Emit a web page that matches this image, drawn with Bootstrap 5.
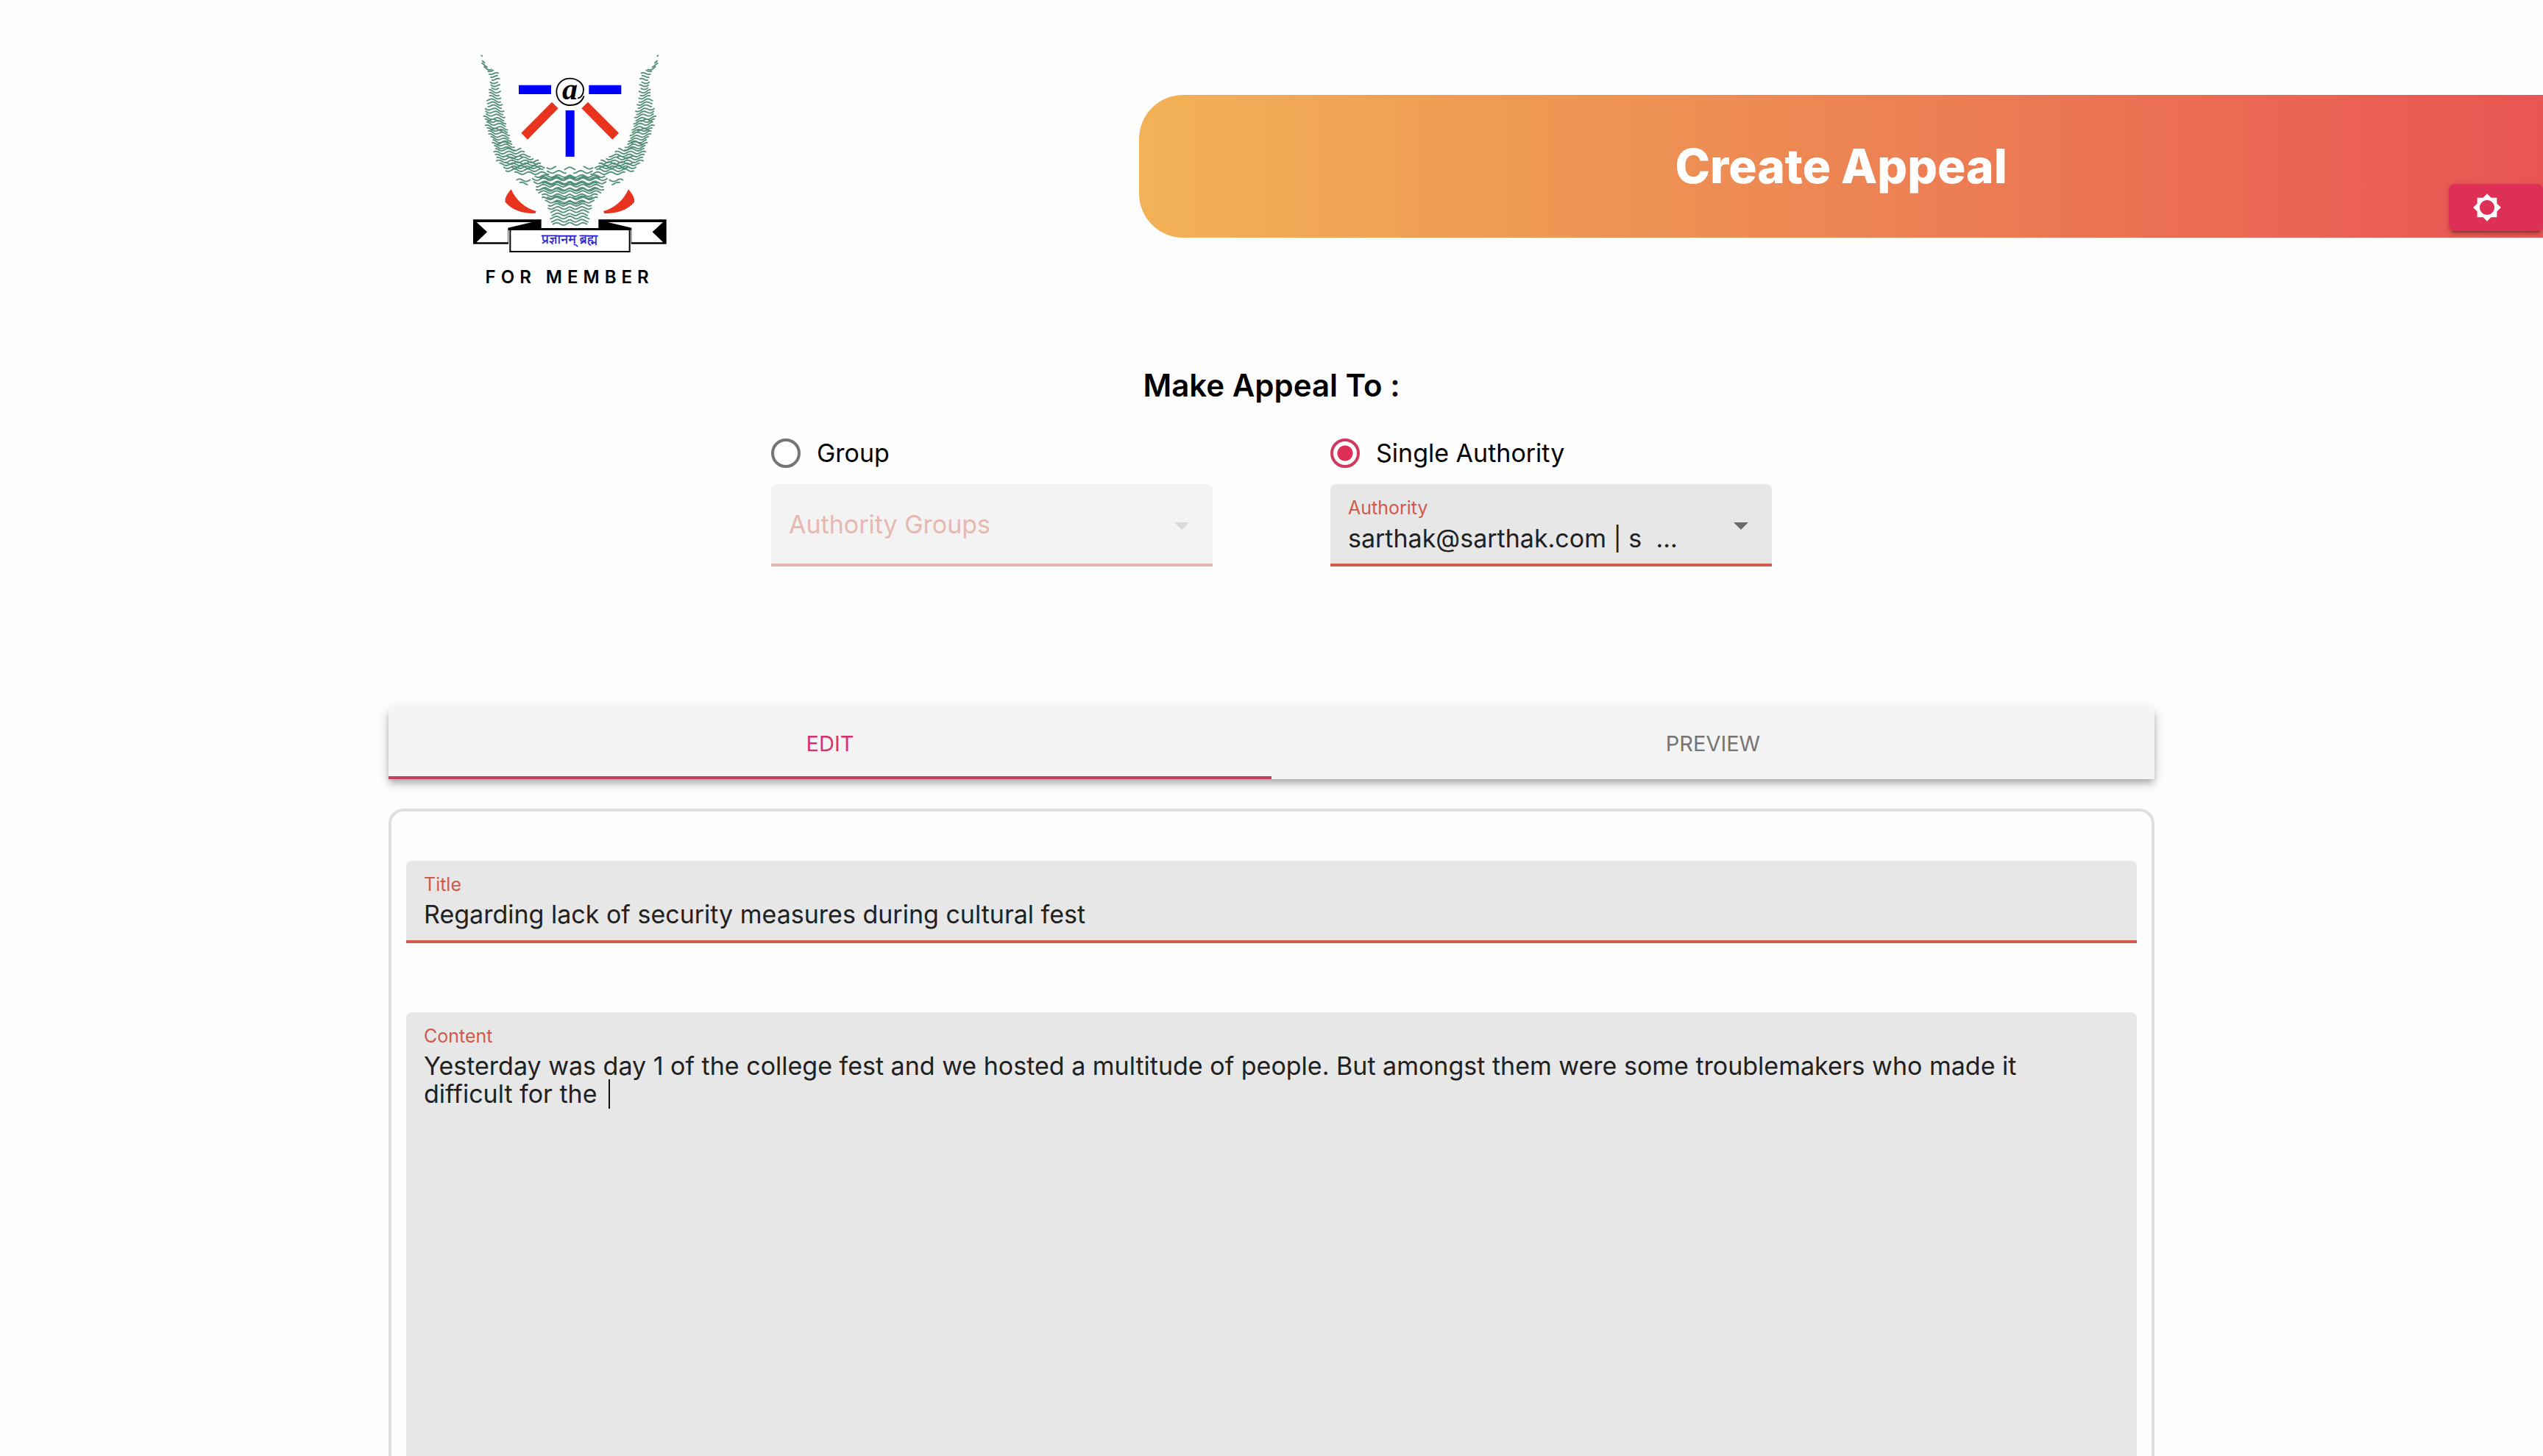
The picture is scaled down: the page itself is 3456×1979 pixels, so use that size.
<!DOCTYPE html>
<html lang="en">
<head>
<meta charset="utf-8">
<meta name="viewport" content="width=device-width, initial-scale=1">
<title>Create Appeal</title>
<link rel="stylesheet" href="https://cdn.jsdelivr.net/npm/bootstrap@5.3.0/dist/css/bootstrap.min.css">
<style>
  :root { --accent: #de3056; --coral: #cf5a4a; --field: #e7e7e7; }
  body { font-family: Inter, "Noto Sans", sans-serif; font-size: 34px; line-height: 40px; color: #000; background: #fefefe; }
  .brand-col { width: 44.8%; padding-top: 73px; }
  .brand-logo { width: 263px; height: 270px; }
  .brand-role { font-size: 24px; line-height: 32px; font-weight: 600; letter-spacing: 7px; margin-top: 18px; }
  .hero { margin-top: 129px; height: 194px; border-radius: 60px 0 0 60px; background: linear-gradient(90deg, #f2b257, #ee9453 33%, #ec7c53 60%, #ea5c54 92%, #e85653); }
  .hero h1 { font-size: 64px; line-height: 72px; font-weight: 800; color: #fff; }
  .theme-btn { right: 0; bottom: 9px; width: 128px; height: 64px; padding: 0 0 0 32px; border-radius: 8px; background: var(--accent); color: #fff;
    box-shadow: 0 6px 2px -4px rgba(0,0,0,.2), 0 4px 4px rgba(0,0,0,.14), 0 2px 10px rgba(0,0,0,.12); }
  .theme-btn:hover { background: #c9284b; color: #fff; }
  .recipient { margin-top: 107px; }
  .recipient h2 { font-size: 42px; line-height: 48px; font-weight: 600; }
  .recipient-grid { gap: 160px; margin-top: 48px; }
  .recipient-col { width: 600px; }
  .pick { gap: 22px; margin-bottom: 22px; }
  .pick input { appearance: none; width: 40px; height: 40px; margin: 0; border: 4px solid #757575; border-radius: 50%; background: #fff; }
  .pick input:checked { border-color: #d03a60; background: radial-gradient(circle, var(--accent) 10px, #fff 11px); }
  .filled { background: var(--field); border-bottom: 4px solid var(--coral); border-radius: 8px 8px 0 0; padding: 16px 24px 0; }
  .filled-line { height: 112px; }
  .filled label { font-size: 25px; line-height: 32px; color: var(--coral); }
  .filled input, .filled select, .filled textarea { border: 0; outline: 0; padding: 0; margin: 0; background: none; color: #212121; width: 100%; display: block; appearance: none; line-height: 38px; resize: none; opacity: 1; }
  .filled input { height: 48px; }
  .filled select { height: 52px; }
  .filled textarea { margin-top: 6px; }
  .filled .arrow { right: 32px; top: 52px; width: 20px; height: 10px; fill: #6b6b6b; pointer-events: none; }
  .filled.is-off { background: #f3f3f3; border-color: #e6b8b0; padding-top: 2px; }
  .filled.is-off select { height: 106px; color: #e6b8b0; }
  .filled.is-off .arrow { fill: #d9d9d9; }
  .editor { width: 100%; max-width: 2400px; margin-top: 193px; }
  .editor-tabs { background: #f4f4f4; box-shadow: 0 4px 8px -2px rgba(0,0,0,.2), 0 8px 10px rgba(0,0,0,.14), 0 2px 20px rgba(0,0,0,.12); }
  .editor-tabs .nav-link { height: 96px; padding: 4px 0 0; border: 0; border-bottom: 4px solid transparent; border-radius: 0; background: none; font-size: 29px; color: #757575; }
  .editor-tabs .nav-link.active { color: #d6336a; border-color: #c2405f; }
  .sheet { margin-top: 40px; border: 4px solid #e0e0e0; border-bottom: 0; border-radius: 20px 20px 0 0; padding: 67px 20px 0; }
  .sheet .filled-line { margin-bottom: 94px; }
  .body-field { border-bottom: 0; }
  .caret-bar { left: 275px; top: 91px; width: 2px; height: 40px; background: #111; }
</style>
<script src="https://cdn.jsdelivr.net/npm/bootstrap@5.3.0/dist/js/bootstrap.bundle.min.js"></script>
</head>
<body class="d-flex flex-column min-vh-100">
<header class="d-flex align-items-start">
  <div class="brand-col d-flex flex-column align-items-center">
    <svg class="brand-logo" viewBox="67 40 789 810" role="img" aria-label="Institute emblem">
      <g id="laurel" fill="none" stroke="#528f76" stroke-width="5.5" stroke-linejoin="round" stroke-linecap="round"></g>
      <g fill="#00f"><path d="M253 168H385V205H253ZM539 168H671V205H539ZM444 271H480V460H444Z"/></g>
      <g fill="#e8331f">
        <path d="M388 237L414 263L289 390L263 363ZM535 237L509 263L635 390L661 363Z"/>
        <path d="M222 593C204 615 196 628 198 645C225 678 270 691 320 691L324 682C279 671 242 638 222 593ZM700 593C718 615 726 628 724 645C697 678 652 691 602 691L598 682C643 671 680 638 700 593Z"/>
      </g>
      <path d="M519 212C510 237 488 250 461 250C430 250 407 226 407 195C407 164 430 141 461 141C494 141 517 162 517 187C517 207 505 222 493 221" fill="none" stroke="#000" stroke-width="5.5"/>
      <text x="430" y="225" font-family="Liberation Serif" font-size="126" font-weight="700" font-style="italic">a</text>
      <path d="M67 716H345V754H211V816H67ZM855 716H578V754H711V816H855Z"/>
      <path d="M82 728L124 767L82 807V809H209V750L306 727H82ZM840 728L798 767L840 807V809H713V750L616 727H840Z" fill="#fff"/>
      <path d="M76 726L123 767L76 810ZM846 726L799 767L846 810Z"/>
      <path d="M218 757H705V847H218Z" fill="#fff" stroke="#000" stroke-width="6"/>
      <path d="M211 751H711V760H211Z"/>
      <text x="460" y="814" text-anchor="middle" font-family="Noto Sans Devanagari, Noto Sans, sans-serif" font-size="54" fill="#2a1fd6" stroke="#2a1fd6">प्रज्ञानम् ब्रह्म</text>
    </svg>
    <div class="brand-role">FOR MEMBER</div>
  </div>
  <div class="hero flex-grow-1 position-relative d-flex align-items-center justify-content-center">
    <h1 class="m-0">Create Appeal</h1>
    <button type="button" class="theme-btn btn border-0 position-absolute d-flex align-items-center" aria-label="Toggle theme">
      <svg width="40" height="40" viewBox="0 0 24 24" fill="currentColor"><path d="M20 15.31L23.31 12 20 8.69V4h-4.69L12 .69 8.69 4H4v4.69L.69 12 4 15.31V20h4.69L12 23.31 15.31 20H20v-4.69zM12 18c-3.31 0-6-2.69-6-6s2.69-6 6-6 6 2.69 6 6-2.69 6-6 6z"/></svg>
    </button>
  </div>
</header>

<main class="d-flex flex-column align-items-center flex-grow-1">
  <section class="recipient">
    <h2 class="m-0 text-center">Make Appeal To :</h2>
    <div class="recipient-grid d-flex flex-wrap justify-content-center">
      <div class="recipient-col">
        <div class="pick d-flex align-items-center">
          <input type="radio" name="target" id="t-group"><label for="t-group">Group</label>
        </div>
        <div class="filled filled-line is-off position-relative">
          <select aria-label="Authority Groups" disabled><option>Authority Groups</option></select>
          <svg class="arrow position-absolute" viewBox="0 0 20 10"><path d="M0 0H20L10 10Z"/></svg>
        </div>
      </div>
      <div class="recipient-col">
        <div class="pick d-flex align-items-center">
          <input type="radio" name="target" id="t-single" checked><label for="t-single">Single Authority</label>
        </div>
        <div class="filled filled-line position-relative">
          <label class="d-block" for="authority">Authority</label>
          <select id="authority"><option>sarthak@sarthak.com | s&nbsp; ...</option></select>
          <svg class="arrow position-absolute" viewBox="0 0 20 10"><path d="M0 0H20L10 10Z"/></svg>
        </div>
      </div>
    </div>
  </section>

  <section class="editor d-flex flex-column flex-grow-1">
    <div class="editor-tabs nav nav-justified" role="tablist">
      <div class="nav-item"><button type="button" class="nav-link active w-100" role="tab" aria-selected="true">EDIT</button></div>
      <div class="nav-item"><button type="button" class="nav-link w-100" role="tab" aria-selected="false">PREVIEW</button></div>
    </div>
    <form class="sheet d-flex flex-column flex-grow-1">
      <div class="filled filled-line">
        <label class="d-block" for="title">Title</label>
        <input id="title" type="text" value="Regarding lack of security measures during cultural fest">
      </div>
      <div class="filled body-field position-relative d-flex flex-column flex-grow-1">
        <label for="content">Content</label>
        <textarea id="content" class="flex-grow-1">Yesterday was day 1 of the college fest and we hosted a multitude of people. But amongst them were some troublemakers who made it
difficult for the </textarea>
        <span class="caret-bar position-absolute"></span>
      </div>
    </form>
  </section>
</main>

<script>
  // Emblem horns: wavy strokes between an outer and an inner edge, mirrored about x = 461.
  const edges = [[45,101,105],[70,97,116],[95,108,143],[120,134,172],[150,137,175],[185,135,178],[220,125,182],[250,120,190],[300,110,200],
    [340,118,210],[380,135,222],[420,150,245],[445,152,285],[475,158,330],[500,180,358],[525,215,358],[536,312,461],[560,308,461],[600,328,461],
    [620,343,461],[650,362,461],[680,380,461],[740,385,461]];
  const at = (y, k) => {
    for (let i = 1; i < edges.length; i++) {
      const a = edges[i - 1], b = edges[i];
      if (y <= b[0]) return a[k] + (b[k] - a[k]) * (y - a[0]) / (b[0] - a[0]);
    }
    return edges[edges.length - 1][k];
  };
  const wave = (x0, x1, y, phase, slope) => {
    let left = "", right = "";
    for (let x = x0; x <= x1; x += 3) {
      const c = y + slope * (x - x0) - 5 * Math.cos((461 - x) / 8.5 + phase);
      const cmd = left ? "L" : "M";
      left += cmd + x.toFixed(0) + " " + c.toFixed(1);
      right += cmd + (922 - x).toFixed(0) + " " + c.toFixed(1);
    }
    return left + right;
  };
  let d = "";
  for (let y = 47, n = 0; y < 740; y += y > 530 ? 13 : 12, n++) {
    const l = at(y, 1) + (n % 3) * 4, r = at(y, 2) - (y < 530 ? (n % 2) * 6 : 0);
    d += wave(l, r, y, y > 530 ? (n % 2) * 0.5 : n * 0.45, y < 100 ? 0.3 : y < 430 ? 0.12 : 0);
  }
  for (const [l, r, y, p] of [[368,405,505,0],[370,445,522,1],[440,461,508,0],[245,300,556,1],[258,290,569,2],[190,270,462,1],
    [225,340,502,2],[200,330,486,0],[340,461,546,0],[350,461,570,0.4],[345,461,595,0],[370,450,625,0.3],[400,461,648,0],[125,170,312,1],[130,185,350,2],[155,210,404,0]])
    d += wave(l, r, y, p, 0);
  const path = document.createElementNS("http://www.w3.org/2000/svg", "path");
  path.setAttribute("d", d);
  document.getElementById("laurel").append(path);
</script>
</body>
</html>
